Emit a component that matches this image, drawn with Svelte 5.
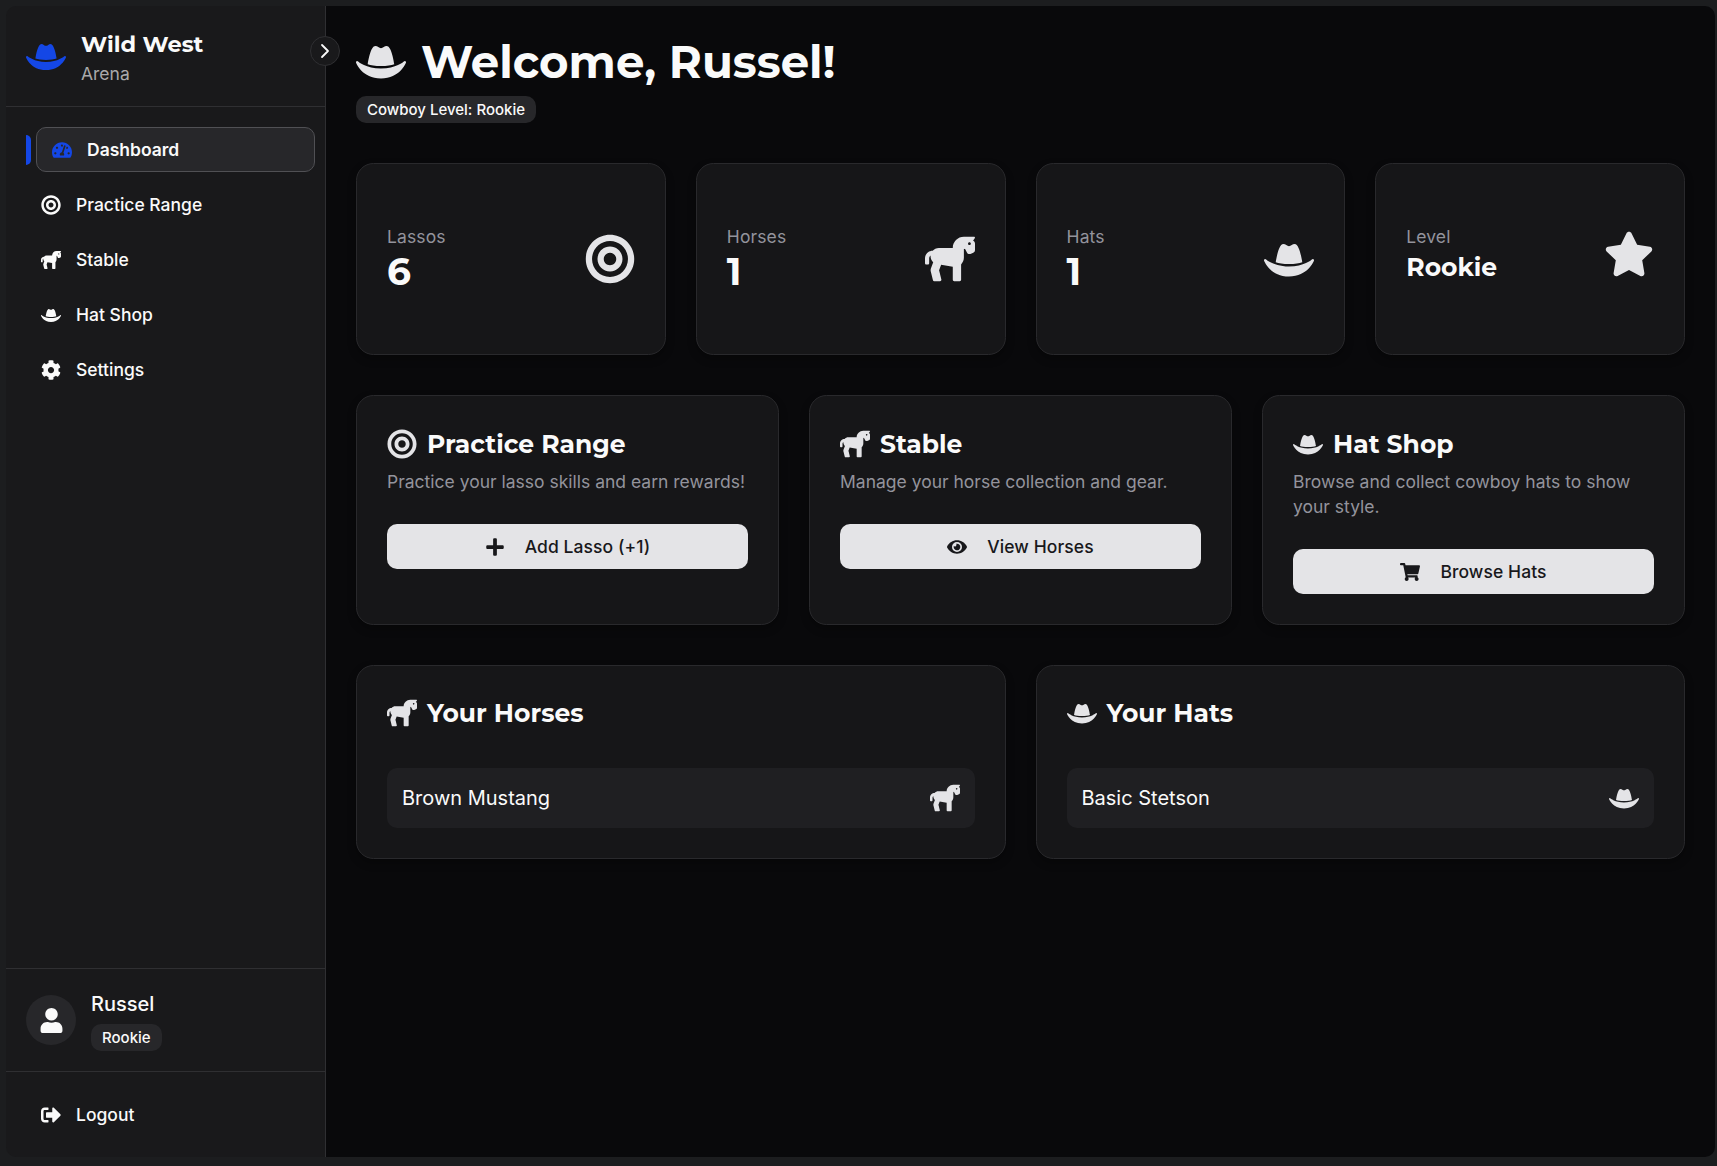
<script>
  const icons = {
    hat: ['0 0 640 512', 'M490 296.9C480.51 239.51 450.51 64 392.3 64c-14 0-26.49 5.93-37 14a58.21 58.21 0 0 1-70.58 0c-10.51-8-23-14-37-14-58.2 0-88.2 175.47-97.71 232.88C188.81 309.47 243.73 320 320 320s131.23-10.51 170-23.1zm142.9-37.18a16 16 0 0 0-19.75 1.5c-1 .9-101.27 90.78-293.16 90.78-190.82 0-292.22-89.94-293.24-90.84A16 16 0 0 0 1 278.53C1.73 280.55 78.32 480 320 480s318.27-199.45 319-201.47a16 16 0 0 0-6.09-18.81z'],
    horse: ['0 0 576 512', 'M575.92 76.6c-.01-8.13-3.02-15.87-8.58-21.8-3.78-4.03-8.58-9.12-13.69-14.5 11.06-6.84 19.5-17.49 22.18-30.66C576.85 4.68 572.96 0 567.9 0H447.92c-70.69 0-128 57.31-128 128H160c-28.84 0-54.4 12.98-72 33.11V160c-48.53 0-88 39.47-88 88v56c0 8.84 7.16 16 16 16h16c8.84 0 16-7.16 16-16v-56c0-13.22 6.87-24.39 16.78-31.68-.21 2.58-.78 5.05-.78 7.68 0 27.64 11.84 52.36 30.54 69.88l-25.72 68.6a63.945 63.945 0 0 0-2.16 37.99l24.85 99.41A15.982 15.982 0 0 0 107.02 512h65.96c10.41 0 18.05-9.78 15.52-19.88l-26.31-105.26 23.84-63.59L320 345.6V496c0 8.84 7.16 16 16 16h64c8.84 0 16-7.16 16-16V318.22c19.74-20.19 32-47.75 32-78.22 0-.22-.07-.42-.08-.64V136.89l16 7.11 18.9 37.7c7.45 14.87 25.05 21.55 40.49 15.37l32.55-13.02a31.997 31.997 0 0 0 20.12-29.74l-.06-77.71zm-64 19.4c-8.84 0-16-7.16-16-16s7.16-16 16-16 16 7.16 16 16-7.16 16-16 16z'],
    target: ['0 0 496 512', 'M248 8C111.03 8 0 119.03 0 256s111.03 248 248 248 248-111.03 248-248S384.97 8 248 8zm0 432c-101.69 0-184-82.29-184-184 0-101.69 82.29-184 184-184 101.69 0 184 82.29 184 184 0 101.69-82.29 184-184 184zm0-312c-70.69 0-128 57.31-128 128s57.31 128 128 128 128-57.31 128-128-57.31-128-128-128zm0 192c-35.29 0-64-28.71-64-64s28.71-64 64-64 64 28.71 64 64-28.71 64-64 64z'],
    star: ['0 0 576 512', 'M259.3 17.8L194 150.2 47.9 171.5c-26.2 3.8-36.7 36.1-17.7 54.6l105.7 103-25 145.5c-4.5 26.3 23.2 46 46.4 33.7L288 439.6l130.7 68.7c23.2 12.2 50.9-7.4 46.4-33.7l-25-145.5 105.7-103c19-18.5 8.5-50.8-17.7-54.6L382 150.2 316.7 17.8c-11.7-23.6-45.6-23.9-57.4 0z'],
    gauge: ['0 0 576 512', 'M288 32C128.94 32 0 160.94 0 320c0 52.8 14.25 102.26 39.06 144.8 5.61 9.62 16.3 15.2 27.44 15.2h443c11.14 0 21.83-5.58 27.44-15.2C561.75 422.26 576 372.8 576 320c0-159.06-128.94-288-288-288zm0 64c14.71 0 26.58 10.13 30.32 23.65-1.11 2.26-2.64 4.23-3.45 6.67l-9.22 27.67c-5.13 3.49-10.97 6.01-17.64 6.01-17.67 0-32-14.33-32-32S270.33 96 288 96zM96 384c-17.67 0-32-14.33-32-32s14.33-32 32-32 32 14.33 32 32-14.33 32-32 32zm48-160c-17.67 0-32-14.33-32-32s14.33-32 32-32 32 14.33 32 32-14.33 32-32 32zm246.77-72.41l-61.33 184C343.13 347.33 352 364.54 352 384c0 11.72-3.38 22.55-8.88 32H232.88c-5.5-9.45-8.88-20.28-8.88-32 0-33.94 26.5-61.43 59.9-63.59l61.34-184.01c4.17-12.56 17.73-19.45 30.36-15.17 12.57 4.19 19.35 17.79 15.17 30.36zm14.66 57.2l15.52-46.55c3.47-1.29 7.13-2.23 11.05-2.23 17.67 0 32 14.33 32 32s-14.33 32-32 32c-11.38-.01-20.89-6.28-26.57-15.22zM480 384c-17.67 0-32-14.33-32-32s14.33-32 32-32 32 14.33 32 32-14.33 32-32 32z'],
    cog: ['0 0 512 512', 'M487.4 315.7l-42.6-24.6c4.3-23.2 4.3-47 0-70.2l42.6-24.6c4.9-2.8 7.1-8.6 5.5-14-11.1-35.6-30-67.8-54.7-94.6-3.8-4.1-10-5.1-14.8-2.3L380.8 110c-17.9-15.4-38.5-27.3-60.8-35.1V25.8c0-5.6-3.9-10.5-9.4-11.7-36.7-8.2-74.3-7.8-109.2 0-5.5 1.2-9.4 6.1-9.4 11.7V75c-22.2 7.9-42.8 19.8-60.8 35.1L88.7 85.5c-4.9-2.8-11-1.9-14.8 2.3-24.7 26.7-43.6 58.9-54.7 94.6-1.7 5.4.6 11.2 5.5 14L67.3 221c-4.3 23.2-4.3 47 0 70.2l-42.6 24.6c-4.9 2.8-7.1 8.6-5.5 14 11.1 35.6 30 67.8 54.7 94.6 3.8 4.1 10 5.1 14.8 2.3l42.6-24.6c17.9 15.4 38.5 27.3 60.8 35.1v49.2c0 5.6 3.9 10.5 9.4 11.7 36.7 8.2 74.3 7.8 109.2 0 5.5-1.2 9.4-6.1 9.4-11.7v-49.2c22.2-7.9 42.8-19.8 60.8-35.1l42.6 24.6c4.9 2.8 11 1.9 14.8-2.3 24.7-26.7 43.6-58.9 54.7-94.6 1.5-5.5-.7-11.3-5.6-14.1zM256 336c-44.1 0-80-35.9-80-80s35.9-80 80-80 80 35.9 80 80-35.9 80-80 80z'],
    user: ['0 0 448 512', 'M224 256c70.7 0 128-57.3 128-128S294.7 0 224 0 96 57.3 96 128s57.3 128 128 128zm89.6 32h-16.7c-22.2 10.2-46.9 16-72.9 16s-50.6-5.8-72.9-16h-16.7C60.2 288 0 348.2 0 422.4V464c0 26.5 21.5 48 48 48h352c26.5 0 48-21.5 48-48v-41.6c0-74.2-60.2-134.4-134.4-134.4z'],
    exit: ['0 0 512 512', 'M497 273L329 441c-15 15-41 4.5-41-17v-96H152c-13.3 0-24-10.7-24-24v-96c0-13.3 10.7-24 24-24h136V88c0-21.4 25.9-32 41-17l168 168c9.3 9.4 9.3 24.6 0 34zM192 436v-40c0-6.6-5.4-12-12-12H96c-17.7 0-32-14.3-32-32V160c0-17.7 14.3-32 32-32h84c6.6 0 12-5.4 12-12V76c0-6.6-5.4-12-12-12H96c-53 0-96 43-96 96v192c0 53 43 96 96 96h84c6.6 0 12-5.4 12-12z'],
    plus: ['0 0 448 512', 'M416 208H272V64c0-17.67-14.33-32-32-32h-32c-17.67 0-32 14.33-32 32v144H32c-17.67 0-32 14.33-32 32v32c0 17.67 14.33 32 32 32h144v144c0 17.67 14.33 32 32 32h32c17.67 0 32-14.33 32-32V304h144c17.67 0 32-14.33 32-32v-32c0-17.67-14.33-32-32-32z'],
    eye: ['0 0 576 512', 'M572.52 241.4C518.29 135.59 410.93 64 288 64S57.68 135.64 3.48 241.41a32.35 32.35 0 0 0 0 29.19C57.71 376.41 165.07 448 288 448s230.32-71.64 284.52-177.41a32.35 32.35 0 0 0 0-29.19zM288 400a144 144 0 1 1 144-144 143.93 143.93 0 0 1-144 144zm0-240a95.31 95.31 0 0 0-25.31 3.79 47.85 47.85 0 0 1-66.9 66.9A95.78 95.78 0 1 0 288 160z'],
    cart: ['0 0 576 512', 'M528.12 301.319l47.273-208C578.806 78.301 567.391 64 551.99 64H159.208l-9.166-44.81C147.758 8.021 137.93 0 126.529 0H24C10.745 0 0 10.745 0 24v16c0 13.255 10.745 24 24 24h69.883l70.248 343.435C147.325 417.1 136 435.222 136 456c0 30.928 25.072 56 56 56s56-25.072 56-56c0-15.674-6.447-29.835-16.824-40h209.647C430.447 426.165 424 440.326 424 456c0 30.928 25.072 56 56 56s56-25.072 56-56c0-22.172-12.888-41.332-31.579-50.405l5.517-24.276c3.413-15.018-8.002-29.319-23.403-29.319H218.117l-6.545-32h293.145c11.206 0 20.92-7.754 23.403-18.681z'],
  };

  const nav = [
    { label: 'Dashboard', icon: 'gauge', active: true },
    { label: 'Practice Range', icon: 'target' },
    { label: 'Stable', icon: 'horse' },
    { label: 'Hat Shop', icon: 'hat' },
    { label: 'Settings', icon: 'cog' },
  ];

  const stats = [
    { label: 'Lassos', value: '6', icon: 'target' },
    { label: 'Horses', value: '1', icon: 'horse' },
    { label: 'Hats', value: '1', icon: 'hat' },
    { label: 'Level', value: 'Rookie', icon: 'star', word: true },
  ];

  const actions = [
    { title: 'Practice Range', icon: 'target', text: 'Practice your lasso skills and earn rewards!', button: 'Add Lasso (+1)', buttonIcon: 'plus' },
    { title: 'Stable', icon: 'horse', text: 'Manage your horse collection and gear.', button: 'View Horses', buttonIcon: 'eye' },
    { title: 'Hat Shop', icon: 'hat', text: 'Browse and collect cowboy hats to show your style.', button: 'Browse Hats', buttonIcon: 'cart' },
  ];

  const collections = [
    { title: 'Your Horses', icon: 'horse', items: ['Brown Mustang'] },
    { title: 'Your Hats', icon: 'hat', items: ['Basic Stetson'] },
  ];
</script>

{#snippet icon(name, size)}
  <svg class="icon {size}" viewBox={icons[name][0]} aria-hidden="true"><path d={icons[name][1]} /></svg>
{/snippet}

<div class="frame">
  <aside class="sidebar">
    <header class="brand">
      <span class="accent">{@render icon('hat', 's40')}</span>
      <div>
        <div class="brand-name heading">Wild West</div>
        <div class="brand-sub">Arena</div>
      </div>
    </header>
    <button class="toggle" aria-label="Toggle sidebar">
      <svg viewBox="0 0 20 20" aria-hidden="true"><path d="M7 4l6 6-6 6" /></svg>
    </button>

    <nav>
      {#each nav as item}
        <a class="nav-item" class:active={item.active} href="#top">
          {@render icon(item.icon, 's20')}
          <span>{item.label}</span>
        </a>
      {/each}
    </nav>

    <section class="profile">
      <div class="avatar">{@render icon('user', 's25')}</div>
      <div>
        <div class="profile-name">Russel</div>
        <span class="badge">Rookie</span>
      </div>
    </section>
    <footer class="logout">
      <a class="nav-item" href="#top">
        {@render icon('exit', 's20')}
        <span>Logout</span>
      </a>
    </footer>
  </aside>

  <main>
    <div class="welcome">
      <h1 class="heading">{@render icon('hat', 's50')}<span>Welcome, Russel!</span></h1>
      <span class="badge">Cowboy Level: Rookie</span>
    </div>

    <div class="grid four">
      {#each stats as stat}
        <article class="card stat">
          <div class="stat-row">
            <div>
              <div class="muted label">{stat.label}</div>
              <div class="heading value" class:word={stat.word}>{stat.value}</div>
            </div>
            {@render icon(stat.icon, 's50')}
          </div>
        </article>
      {/each}
    </div>

    <div class="grid three">
      {#each actions as action}
        <article class="card">
          <h2 class="heading">{@render icon(action.icon, 's30')}<span>{action.title}</span></h2>
          <p class="muted">{action.text}</p>
          <button class="primary">{@render icon(action.buttonIcon, 's20')}<span>{action.button}</span></button>
        </article>
      {/each}
    </div>

    <div class="grid two">
      {#each collections as group}
        <article class="card">
          <h2 class="heading">{@render icon(group.icon, 's30')}<span>{group.title}</span></h2>
          <ul>
            {#each group.items as entry}
              <li><span>{entry}</span>{@render icon(group.icon, 's30')}</li>
            {/each}
          </ul>
        </article>
      {/each}
    </div>
  </main>
</div>

<style>
  :global(body) {
    margin: 0;
    background: #1c1d1f;
  }
  .frame {
    box-sizing: border-box;
    display: flex;
    height: 1166px;
    padding: 6px 2px 9px 6px;
    font-family: Inter, sans-serif;
    font-size: 17.5px;
    line-height: 25px;
    color: #fafafa;
  }
  .icon {
    display: block;
    flex: none;
    fill: currentColor;
  }
  .s20 { width: 20px; height: 20px; }
  .s25 { width: 25px; height: 25px; }
  .s30 { width: 30px; height: 30px; }
  .s40 { width: 40px; height: 40px; }
  .s50 { width: 50px; height: 50px; }
  .heading {
    font-family: Montserrat, Inter, sans-serif;
    font-weight: 700;
  }

  .sidebar {
    position: relative;
    box-sizing: border-box;
    display: flex;
    flex-direction: column;
    width: 320px;
    flex: none;
    background: #19191b;
    border-right: 1px solid #2f2f32;
    border-radius: 10px 0 0 10px;
  }
  .brand {
    display: flex;
    align-items: center;
    gap: 15px;
    padding: 20px;
    border-bottom: 1px solid #2f2f32;
  }
  .accent { color: #1447e6; }
  .brand-name {
    height: 35px;
    font-size: 22.5px;
    line-height: 37px;
  }
  .brand-sub { color: #a9a9ab; }
  .toggle {
    position: absolute;
    top: 30px;
    right: -15px;
    width: 30px;
    height: 30px;
    padding: 4px;
    background: #19191b;
    border: 1px solid #2f2f32;
    border-radius: 50%;
  }
  .toggle svg {
    display: block;
    width: 20px;
    height: 20px;
    fill: none;
    stroke: #fafafa;
    stroke-width: 1.8;
    stroke-linecap: round;
    stroke-linejoin: round;
  }
  nav {
    display: flex;
    flex-direction: column;
    gap: 10px;
    flex: 1;
    padding: 20px 10px 20px 20px;
  }
  .nav-item {
    position: relative;
    box-sizing: border-box;
    display: flex;
    align-items: center;
    gap: 15px;
    height: 45px;
    padding: 0 15px;
    font-weight: 500;
    color: #fafafa;
    text-decoration: none;
    border-radius: 10px;
  }
  .nav-item.active {
    margin-left: 10px;
    font-weight: 600;
    background: #27272a;
    border: 1px solid #505054;
  }
  .active .icon { color: #1447e6; }
  .active::before {
    content: '';
    position: absolute;
    left: -11px;
    top: 7px;
    width: 5px;
    height: 30px;
    background: #1447e6;
    border-radius: 0 5px 5px 0;
  }
  .profile {
    display: flex;
    align-items: center;
    gap: 15px;
    height: 62px;
    padding: 20px;
    border-top: 1px solid #2f2f32;
    border-bottom: 1px solid #2f2f32;
  }
  .avatar {
    display: grid;
    place-items: center;
    width: 50px;
    height: 50px;
    background: #27272a;
    border-radius: 50%;
  }
  .profile-name {
    margin-bottom: 5px;
    font-size: 20px;
    font-weight: 500;
    line-height: 30px;
  }
  .badge {
    display: block;
    width: fit-content;
    height: 27px;
    padding: 0 11px;
    font-size: 15px;
    font-weight: 500;
    line-height: 27px;
    background: #27272a;
    border-radius: 10px;
  }
  .logout { padding: 20px 10px 20px 20px; }

  main {
    flex: 1;
    min-width: 0;
    padding: 30px;
    background: #09090b;
    border-radius: 0 10px 10px 0;
  }
  h1, h2, p, ul { margin: 0; }
  h1 {
    display: flex;
    align-items: center;
    gap: 15px;
    height: 50px;
    font-size: 45px;
    line-height: 50px;
  }
  h1 span { padding-top: 2px; }
  .welcome .badge { margin: 10px 0 40px; }

  .grid {
    display: grid;
    gap: 30px;
    margin-bottom: 40px;
  }
  .four { grid-template-columns: repeat(4, 1fr); }
  .three { grid-template-columns: repeat(3, 1fr); }
  .two { grid-template-columns: repeat(2, 1fr); }
  .card {
    padding: 30px;
    background: #161618;
    border: 1px solid #29292c;
    border-radius: 17.5px;
    box-shadow: 0 4px 8px rgba(0, 0, 0, 0.3);
  }
  .card .icon { color: #e4e4e7; }
  .muted { color: #93939c; }
  .label { letter-spacing: 0.12px; }
  .stat { padding: 60px 30px; }
  .stat-row {
    display: flex;
    align-items: center;
    justify-content: space-between;
  }
  h1 .icon { color: #e4e4e7; }
  .value {
    font-size: 37.5px;
    line-height: 45px;
  }
  .value.word {
    height: 35px;
    font-size: 25px;
    line-height: 37px;
  }
  h2 {
    display: flex;
    align-items: center;
    gap: 10px;
    height: 35px;
    font-size: 25px;
    line-height: 33px;
  }
  h2 span { padding-top: 2px; }
  p { margin: 8px 0 30px; }
  .primary {
    display: flex;
    align-items: center;
    justify-content: center;
    gap: 20px;
    width: 100%;
    height: 45px;
    padding: 0;
    font: inherit;
    font-weight: 500;
    letter-spacing: 0.08px;
    color: #18181b;
    background: #e4e4e7;
    border: 0;
    border-radius: 10px;
  }
  .card .primary .icon { color: #18181b; }
  .two h2 { height: 33px; }
  ul {
    padding: 0;
    margin-top: 39px;
    list-style: none;
  }
  li {
    display: flex;
    align-items: center;
    justify-content: space-between;
    height: 60px;
    padding: 0 15px;
    font-size: 20px;
    background: #1f1f22;
    border-radius: 10px;
  }
</style>
